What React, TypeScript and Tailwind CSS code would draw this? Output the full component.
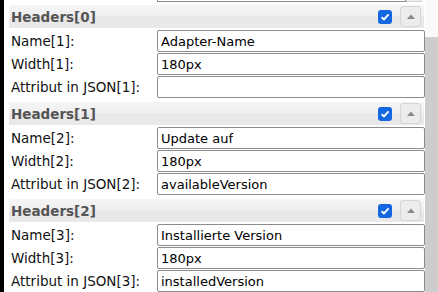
import React from "react";

const groups = [
  {
    title: "Headers[0]",
    n: 1,
    name: "Adapter-Name",
    width: "180px",
    attr: "",
  },
  {
    title: "Headers[1]",
    n: 2,
    name: "Update auf",
    width: "180px",
    attr: "availableVersion",
  },
  {
    title: "Headers[2]",
    n: 3,
    name: "Installierte Version",
    width: "180px",
    attr: "installedVersion",
  },
];

const font = { fontFamily: '"DejaVu Sans", Verdana, sans-serif' };

function Row({ label, value }: { label: string; value: string }) {
  return (
    <div className="flex h-[23px] items-start">
      <div className="flex h-[22px] w-[148px] items-center pl-[2px] pt-[1px] text-[13.5px] text-[#111]">
        {label}
      </div>
      <input
        readOnly
        defaultValue={value}
        className="h-[22px] w-[268px] rounded-[2px] border border-[#8c8c8c] bg-white px-[3px] pt-[1px] text-[13px] text-black outline-none"
        style={font}
      />
    </div>
  );
}

function Header({ title }: { title: string }) {
  return (
    <div className="mr-[1px] mt-[3px] mb-[2px] flex h-[23px] items-center bg-[linear-gradient(#f5f5f5_0%,#f0f0f0_45%,#e8e8e8_55%,#e9e9e9_100%)]">
      <span className="flex-1 pl-[2px] pt-[1px] text-[13.5px] font-bold text-[#555]">{title}</span>
      <div className="flex h-[14px] w-[14px] items-center justify-center rounded-[3px] bg-[#1467e0]">
        <svg width="10" height="10" viewBox="0 0 10 10">
          <path d="M1.6 5.2 L4 7.5 L8.6 2.4" fill="none" stroke="#fff" strokeWidth="1.9" />
        </svg>
      </div>
      <div className="ml-[8px] mr-[3px] flex h-[21px] w-[21px] items-center justify-center rounded-[3px] border border-[#d6d6d6] bg-[#ececec]">
        <svg width="8" height="5" viewBox="0 0 8 5">
          <path d="M0 5 L4 0.5 L8 5 Z" fill="#8a8a8a" />
        </svg>
      </div>
    </div>
  );
}

export default function App() {
  return (
    <div className="flex h-[292px] w-[438px] overflow-hidden bg-white" style={font}>
      <div className="w-[4px] bg-black" />
      <div className="w-[421px] pl-[5px]">
        {/* bottom of the previous row */}
        <div className="flex h-[2px]">
          <div className="ml-[148px] w-[249px] border-x border-b border-[#8c8c8c]" />
          <div className="w-[16px] border-x border-b border-[#d6d6d6] bg-[#ececec]" />
        </div>
        {groups.map((g) => (
          <div key={g.title}>
            <Header title={g.title} />
            <Row label={`Name[${g.n}]:`} value={g.name} />
            <Row label={`Width[${g.n}]:`} value={g.width} />
            <Row label={`Attribut in JSON[${g.n}]:`} value={g.attr} />
          </div>
        ))}
      </div>
      <div className="flex w-[13px] flex-col bg-[#fafafa]">
        <div className="h-[37px]" />
        <div className="flex-1 bg-[#cdcdcd]" />
      </div>
    </div>
  );
}
